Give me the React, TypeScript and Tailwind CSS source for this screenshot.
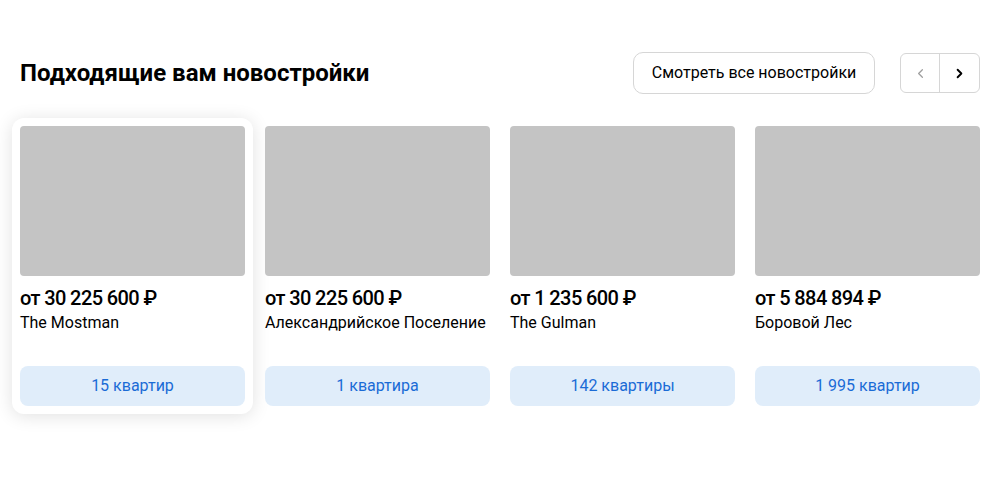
import { ChevronLeft, ChevronRight } from 'lucide-react';

type Building = {
  price: string;
  name: string;
  flats: string;
};

const buildings: Building[] = [
  { price: 'от 30 225 600 ₽', name: 'The Mostman', flats: '15 квартир' },
  { price: 'от 30 225 600 ₽', name: 'Александрийское Поселение', flats: '1 квартира' },
  { price: 'от 1 235 600 ₽', name: 'The Gulman', flats: '142 квартиры' },
  { price: 'от 5 884 894 ₽', name: 'Боровой Лес', flats: '1 995 квартир' },
];

const BuildingCard = ({ item, active }: { item: Building; active?: boolean }) => (
  <div className={`flex flex-col p-2 rounded-xl ${active ? 'bg-white shadow-[0_2px_18px_rgba(0,0,0,0.12)]' : ''}`}>
    <div className="h-[150px] rounded-[4px] bg-[#c4c4c4]" />
    <p className="mt-[10px] text-[20px] leading-6 font-medium tracking-[-0.03em] text-black whitespace-nowrap">{item.price}</p>
    <p className="mt-[3px] text-[16px] leading-5 text-black whitespace-nowrap">{item.name}</p>
    <button className="mt-[33px] h-10 rounded-lg bg-[#e0edfa] text-[16px] text-[#1a6bd6]">{item.flats}</button>
  </div>
);

export default function App() {
  return (
    <div className="w-[1000px] h-[500px] bg-white font-['Roboto',sans-serif]">
      <div className="px-5 pt-[52px]">
        <div className="flex items-center justify-between h-[42px]">
          <h2 className="text-[24px] font-bold text-black">Подходящие вам новостройки</h2>
          <div className="flex items-center gap-[25px]">
            <button className="h-[42px] w-[242px] rounded-[10px] border border-[#d6d6d6] text-[16px] text-black">
              Смотреть все новостройки
            </button>
            <div className="flex h-10 rounded-md border border-[#d6d6d6]">
              <button className="w-[39px] flex items-center justify-center border-r border-[#d6d6d6] text-[#9e9e9e]">
                <ChevronLeft size={15} strokeWidth={2} />
              </button>
              <button className="w-[39px] flex items-center justify-center text-black">
                <ChevronRight size={15} strokeWidth={3} />
              </button>
            </div>
          </div>
        </div>
      </div>
      <div className="grid grid-cols-4 gap-1 px-3 mt-6">
        {buildings.map((b, i) => (
          <BuildingCard key={i} item={b} active={i === 0} />
        ))}
      </div>
    </div>
  );
}
